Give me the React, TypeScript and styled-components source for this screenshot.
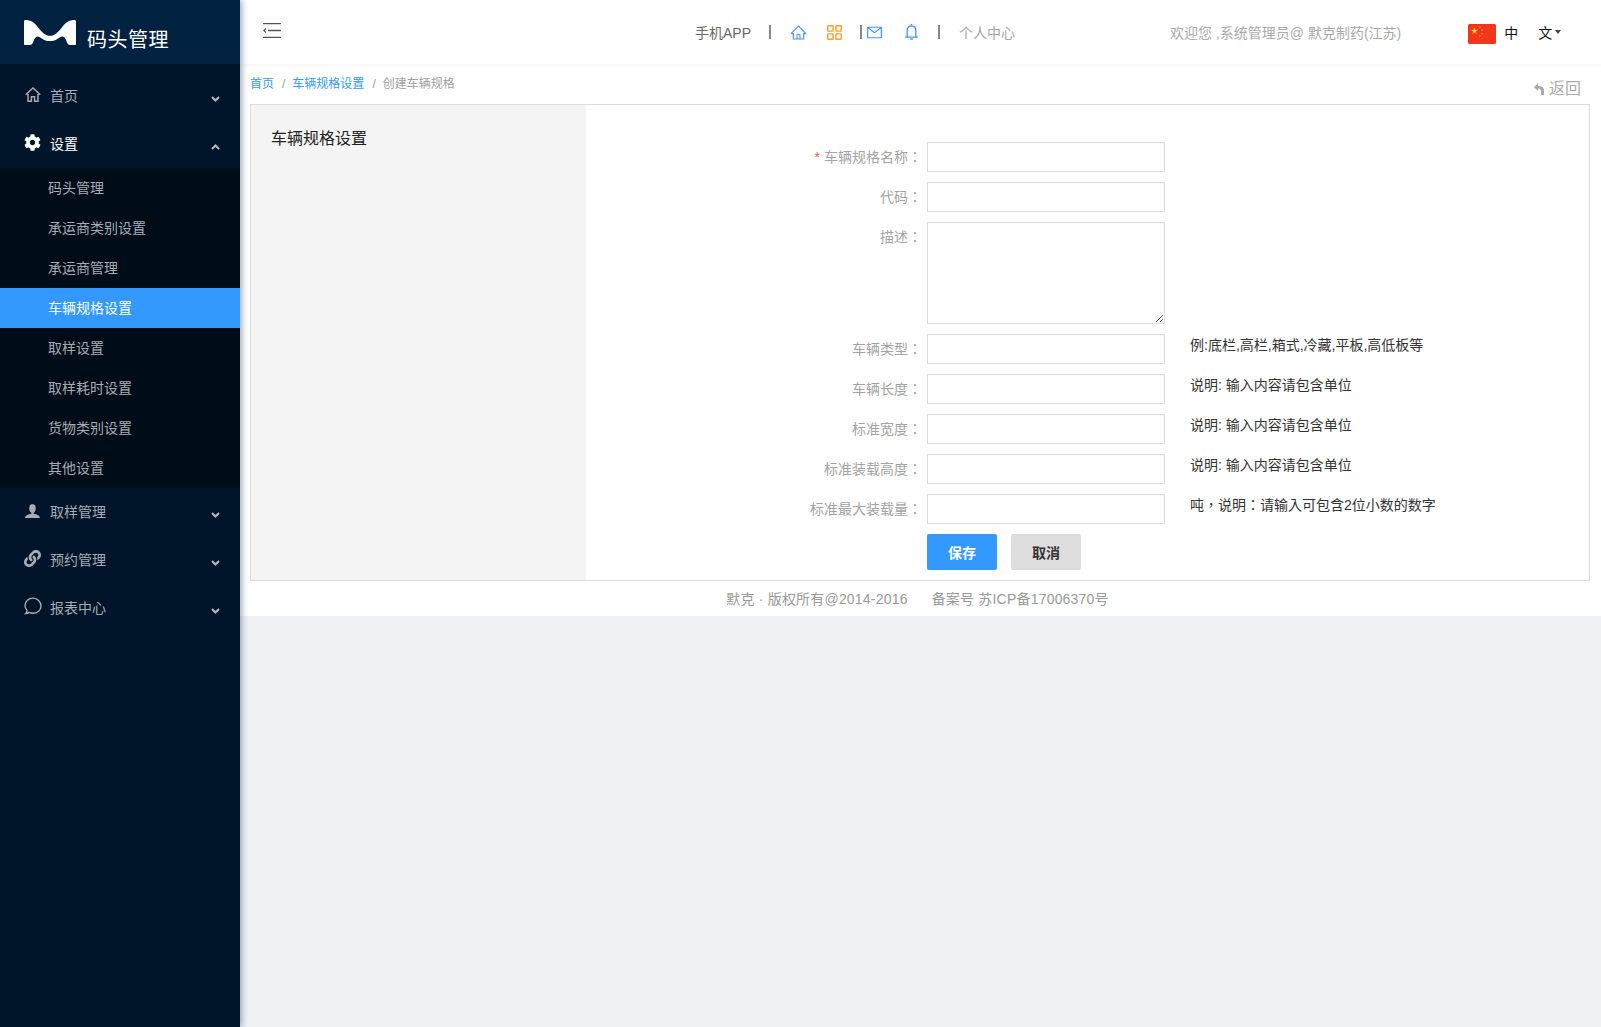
import React from "react";
import styled, { createGlobalStyle } from "styled-components";
import { AiOutlineHome, AiOutlineMail } from "react-icons/ai";
import { FaCog, FaLink } from "react-icons/fa";
import { ImUser } from "react-icons/im";

const FONT = `"Liberation Sans", "Noto Sans CJK SC", sans-serif`;

const Global = createGlobalStyle`
  html, body { margin: 0; padding: 0; height: 100%; overflow: hidden; background: #f0f1f5; }
  #root { height: 100%; }
  * { box-sizing: border-box; }
  body { font-family: ${FONT}; font-size: 14px; }
`;

const Page = styled.div`
  display: flex;
  height: 1027px;
`;

const Sidebar = styled.aside`
  width: 240px;
  flex: none;
  background: #001529;
  box-shadow: 2px 0 6px rgba(0, 21, 41, 0.35);
  position: relative;
  z-index: 2;
`;

const Brand = styled.div`
  height: 64px;
  background: #002140;
  display: flex;
  align-items: center;
  padding-left: 24px;
  color: #fff;
`;

const BrandName = styled.span`
  font-size: 20px;
  line-height: 24px;
  letter-spacing: 0.5px;
  margin: 16px 0 0 11px;
`;

const Menu = styled.nav`
  padding-top: 8px;
`;

const MenuRow = styled.div<{ $open?: boolean }>`
  height: 48px;
  display: flex;
  align-items: center;
  padding: 0 20px 0 24px;
  color: ${(p) => (p.$open ? "#fff" : "#a6adb4")};
  font-size: 14px;
`;

const MenuIcon = styled.span`
  width: 26px;
  flex: none;
  display: flex;
  align-items: center;
  font-size: 17px;
  margin-bottom: 4px;
`;

const MenuLabel = styled.span`
  flex: 1;
  margin-bottom: 2px;
`;

const Caret = styled.span`
  display: flex;
  color: #b4bac0;
  margin-top: 6px;
`;

const SubMenu = styled.div`
  background: #000c17;
`;

const SubItem = styled.div<{ $active?: boolean }>`
  height: 40px;
  line-height: 40px;
  padding-left: 48px;
  font-size: 14px;
  color: ${(p) => (p.$active ? "#fff" : "#a6adb4")};
  background: ${(p) => (p.$active ? "#3399ff" : "transparent")};
`;

const Main = styled.div`
  flex: 1;
  min-width: 0;
  display: flex;
  flex-direction: column;
`;

const Header = styled.header`
  height: 64px;
  flex: none;
  background: #fff;
  display: flex;
  align-items: center;
  box-shadow: 0 2px 4px rgba(0, 0, 0, 0.04);
  position: relative;
`;

const Toggle = styled.span`
  display: flex;
  margin: 0 0 4px 23px;
`;

const NavCluster = styled.nav`
  display: flex;
  align-items: center;
  margin-left: 414px;
  height: 64px;
`;

const NavText = styled.span<{ $gap: number; $muted?: boolean }>`
  margin-left: ${(p) => p.$gap}px;
  font-size: 14px;
  color: ${(p) => (p.$muted ? "#a5a5a5" : "#666")};
  white-space: nowrap;
`;

const NavSep = styled.span<{ $gap: number }>`
  width: 2px;
  height: 14px;
  background: #888;
  margin-left: ${(p) => p.$gap}px;
`;

const NavIcon = styled.span<{ $gap: number; $color: string }>`
  display: flex;
  font-size: 17px;
  margin-left: ${(p) => p.$gap}px;
  color: ${(p) => p.$color};
`;

const Welcome = styled.span`
  margin-left: 155px;
  color: #a9a9a9;
  font-size: 14px;
  white-space: nowrap;
`;

const Flag = styled.span`
  display: flex;
  margin-left: 67px;
  margin-top: 3px;
`;

const Lang = styled.span`
  display: flex;
  align-items: center;
  margin-left: 8px;
  color: #111;
  font-size: 14px;
`;

const LangRest = styled.span`
  margin-left: 20px;
`;

const LangCaret = styled.span`
  width: 0;
  height: 0;
  margin-left: 3px;
  border-left: 3px solid transparent;
  border-right: 3px solid transparent;
  border-top: 4px solid #444;
`;

const Content = styled.div`
  flex: none;
  height: 552px;
  background: #fff;
  padding: 0 11px 0 10px;
  display: flex;
  flex-direction: column;
`;

const CrumbBar = styled.div`
  height: 40px;
  flex: none;
  display: flex;
  justify-content: space-between;
  padding-top: 11px;
  font-size: 12px;
  line-height: 18px;
`;

const Crumbs = styled.div`
  display: flex;
  color: #a0a0a0;
`;

const CrumbLink = styled.span`
  color: #3399ff;
`;

const CrumbSlash = styled.span`
  margin: 0 7px 0 8px;
  color: #999;
`;

const Back = styled.div`
  display: flex;
  align-items: center;
  gap: 5px;
  font-size: 16px;
  color: #aaa;
  margin: 3px 9px 0 0;
  height: 22px;
`;

const Panel = styled.section`
  height: 477px;
  flex: none;
  border: 1px solid #dcdcdc;
  display: flex;
`;

const PanelSide = styled.div`
  width: 335px;
  flex: none;
  background: #f4f4f4;
  padding: 21px 0 0 20px;
`;

const PanelTitle = styled.h2`
  margin: 0;
  font-size: 16px;
  line-height: 26px;
  font-weight: 400;
  color: #222;
`;

const Form = styled.form`
  flex: 1;
  padding-top: 37px;
  display: flex;
  flex-direction: column;
  gap: 10px;
`;

const Row = styled.div`
  display: flex;
  align-items: flex-start;
`;

const Label = styled.label`
  width: 336px;
  height: 30px;
  flex: none;
  margin-right: 5px;
  text-align: right;
  font-size: 14px;
  line-height: 28px;
  color: #a3a3a3;
  white-space: nowrap;
`;

const Colon = styled.span`
  font-family: "Noto Sans CJK TC", sans-serif;
`;

const Star = styled.span`
  color: #f5564e;
  margin-right: 4px;
`;

const Input = styled.input`
  width: 238px;
  height: 30px;
  flex: none;
  border: 1px solid #dcdcdc;
  background: #fff;
  outline: none;
  padding: 0 6px;
`;

const TextArea = styled.textarea`
  width: 238px;
  height: 102px;
  flex: none;
  border: 1px solid #dcdcdc;
  background: #fff;
  outline: none;
  margin: 0;
  display: block;
`;

const Hint = styled.span<{ $punct?: boolean }>`
  margin-left: 25px;
  font-size: 14px;
  line-height: 22px;
  height: 22px;
  color: #333;
  white-space: nowrap;
  font-family: ${(p) => (p.$punct ? `"Liberation Sans", "Noto Sans CJK TC", sans-serif` : "inherit")};
`;

const Actions = styled.div`
  display: flex;
  gap: 14px;
  margin-left: 341px;
`;

const Button = styled.button<{ $primary?: boolean }>`
  width: 70px;
  height: 36px;
  border: 0;
  border-radius: 2px;
  font-family: ${FONT};
  font-size: 14px;
  font-weight: 700;
  color: ${(p) => (p.$primary ? "#fff" : "#333")};
  background: ${(p) => (p.$primary ? "#3399ff" : "#dddddd")};
`;

const Footer = styled.footer`
  display: flex;
  justify-content: center;
  gap: 24px;
  height: 35px;
  flex: none;
  background: #fff;
  line-height: 36px;
  font-size: 14px;
  letter-spacing: 0.2px;
  color: #999;
  padding-right: 6px;
  margin: 0 -11px 0 -10px;
`;

const MLogo = () => (
  <svg width="52" height="25" viewBox="0 0 52 25">
    <path
      fill="#fff"
      d="M0 1.500C0 .5.6 0 1.600 0c5.200 0 8.600 2.400 12.400 7.200 3.600 4.600 7.200 8.600 12 8.600s8.400-4 12-8.600C41.800 2.400 45.200 0 50.400 0c1 0 1.600.5 1.600 1.500V24c0 .6-.4 1-1 1h-5c-1.800 0-2.600-1-3.400-3.400-1-3-2-5.200-4.200-5.200-3 0-5.400 4.600-12.400 4.600S16.600 16.400 13.600 16.400c-2.200 0-3.200 2.200-4.200 5.200C8.600 24 7.800 25 6 25H1c-.6 0-1-.4-1-1z"
    />
  </svg>
);

const MenuToggleIcon = () => (
  <svg width="18" height="15" viewBox="0 0 18 15" fill="none" stroke="#555" strokeWidth="1.300">
    <path d="M0 .7h18M5 7.500h13M0 14.300h18M3 5.500L1 7.500l2 2" />
  </svg>
);

const BackIcon = () => (
  <svg width="10" height="12" viewBox="0 0 10 12">
    <path fill="#a9a9a9" d="M4 0L0 4.200 4 8V5.400c2 0 3 .9 3 2.600v4h3V7.500C10 4.400 7.800 3 4 3z" />
  </svg>
);

const SideHomeIcon = () => (
  <svg width="16" height="15" viewBox="0 0 16 15" fill="none" stroke="currentColor" strokeWidth="1.500" style={{ marginLeft: 1 }}>
    <path d="M.7 7.800L8 1l7.300 6.800M3 7v7.200h3.400V9.700h3.200v4.500H13V7" />
  </svg>
);

const ChevronIcon = ({ up }: { up?: boolean }) => (
  <svg width="9" height="6" viewBox="0 0 9 6" fill="none" stroke="currentColor" strokeWidth="2">
    <path d={up ? "M1 5l3.500-3.500L8 5" : "M1 1l3.500 3.500L8 1"} />
  </svg>
);

const BubbleIcon = () => (
  <svg width="18" height="18" viewBox="0 0 18 18" fill="none" stroke="currentColor" strokeWidth="1.400">
    <path d="M1.700 16.600c1.600 0 2.600-.5 3.400-1.200 1.100.6 2.500.9 3.900.9 4.300 0 8-3.100 8-7.200S13.300 1.100 9 1.100 1 4.200 1 8.300c0 2 .7 3.600 2 4.900.1 1.300-.4 2.500-1.300 3.400z" />
  </svg>
);

const GridIcon = () => (
  <svg width="15" height="15" viewBox="0 0 15 15" fill="none" stroke="#ff9d28" strokeWidth="1.400">
    <rect x=".7" y=".7" width="5.400" height="5.400" rx=".6" />
    <rect x="8.900" y=".7" width="5.400" height="5.400" rx=".6" />
    <rect x=".7" y="8.900" width="5.400" height="5.400" rx=".6" />
    <rect x="8.900" y="8.900" width="5.400" height="5.400" rx=".6" />
  </svg>
);

const BellIcon = () => (
  <svg width="13" height="16" viewBox="0 0 13 16" fill="none" stroke="#3f93ff" strokeWidth="1.300">
    <path d="M2.200 13V6.200c0-2.600 1.800-4.400 4.300-4.400s4.300 1.800 4.300 4.400V13M.2 13.200h12.600M6.500 0v1.800M5 15.200h3" />
  </svg>
);

const star = (cx: number, cy: number, r: number) => {
  const pts: string[] = [];
  for (let i = 0; i < 10; i++) {
    const rad = i % 2 ? r * 0.4 : r;
    const a = -Math.PI / 2 + (i * Math.PI) / 5;
    pts.push(`${cx + rad * Math.cos(a)},${cy + rad * Math.sin(a)}`);
  }
  return pts.join(" ");
};

const ChinaFlag = () => (
  <svg width="28" height="20" viewBox="0 0 28 20">
    <rect width="28" height="20" rx="1.500" fill="#f4361c" />
    <g fill="#ffd83a">
      <polygon points={star(6.500, 7, 3.600)} />
      <polygon points={star(12, 3, 1)} />
      <polygon points={star(14, 6, 1)} />
      <polygon points={star(14, 9.500, 1)} />
      <polygon points={star(12, 12, 1)} />
    </g>
  </svg>
);

const subItems = ["码头管理", "承运商类别设置", "承运商管理", "车辆规格设置", "取样设置", "取样耗时设置", "货物类别设置", "其他设置"];

const hintUnit = "说明: 输入内容请包含单位";

const fields = [
  { label: "车辆类型", hint: "例:底栏,高栏,箱式,冷藏,平板,高低板等" },
  { label: "车辆长度", hint: hintUnit },
  { label: "标准宽度", hint: hintUnit },
  { label: "标准装载高度", hint: hintUnit },
  { label: "标准最大装载量", hint: "吨，说明：请输入可包含2位小数的数字", punct: true },
];

export default function App() {
  return (
    <Page>
      <Global />
      <Sidebar>
        <Brand>
          <MLogo />
          <BrandName>码头管理</BrandName>
        </Brand>
        <Menu>
          <MenuRow>
            <MenuIcon><SideHomeIcon /></MenuIcon>
            <MenuLabel>首页</MenuLabel>
            <Caret><ChevronIcon /></Caret>
          </MenuRow>
          <MenuRow $open>
            <MenuIcon><FaCog /></MenuIcon>
            <MenuLabel>设置</MenuLabel>
            <Caret><ChevronIcon up /></Caret>
          </MenuRow>
          <SubMenu>
            {subItems.map((s) => (
              <SubItem key={s} $active={s === "车辆规格设置"}>{s}</SubItem>
            ))}
          </SubMenu>
          <MenuRow>
            <MenuIcon><ImUser /></MenuIcon>
            <MenuLabel>取样管理</MenuLabel>
            <Caret><ChevronIcon /></Caret>
          </MenuRow>
          <MenuRow>
            <MenuIcon><FaLink /></MenuIcon>
            <MenuLabel>预约管理</MenuLabel>
            <Caret><ChevronIcon /></Caret>
          </MenuRow>
          <MenuRow>
            <MenuIcon><BubbleIcon /></MenuIcon>
            <MenuLabel>报表中心</MenuLabel>
            <Caret><ChevronIcon /></Caret>
          </MenuRow>
        </Menu>
      </Sidebar>
      <Main>
        <Header>
          <Toggle><MenuToggleIcon /></Toggle>
          <NavCluster>
            <NavText $gap={0}>手机APP</NavText>
            <NavSep $gap={18} />
            <NavIcon $gap={19} $color="#4a90ff"><AiOutlineHome /></NavIcon>
            <NavIcon $gap={20} $color="#ff9d28"><GridIcon /></NavIcon>
            <NavSep $gap={18} />
            <NavIcon $gap={4} $color="#3f93ff"><AiOutlineMail /></NavIcon>
            <NavIcon $gap={22} $color="#3f93ff"><BellIcon /></NavIcon>
            <NavSep $gap={20} />
            <NavText $gap={19} $muted>个人中心</NavText>
            <Welcome>欢迎您 ,系统管理员@ 默克制药(江苏)</Welcome>
            <Flag><ChinaFlag /></Flag>
            <Lang>
              中
              <LangRest>文</LangRest>
              <LangCaret />
            </Lang>
          </NavCluster>
        </Header>
        <Content>
          <CrumbBar>
            <Crumbs>
              <CrumbLink>首页</CrumbLink>
              <CrumbSlash>/</CrumbSlash>
              <CrumbLink>车辆规格设置</CrumbLink>
              <CrumbSlash>/</CrumbSlash>
              创建车辆规格
            </Crumbs>
            <Back><BackIcon />返回</Back>
          </CrumbBar>
          <Panel>
            <PanelSide>
              <PanelTitle>车辆规格设置</PanelTitle>
            </PanelSide>
            <Form>
              <Row>
                <Label><Star>*</Star>车辆规格名称<Colon>：</Colon></Label>
                <Input />
              </Row>
              <Row>
                <Label>代码<Colon>：</Colon></Label>
                <Input />
              </Row>
              <Row>
                <Label>描述<Colon>：</Colon></Label>
                <TextArea />
              </Row>
              {fields.map((f) => (
                <Row key={f.label}>
                  <Label>{f.label}<Colon>：</Colon></Label>
                  <Input />
                  <Hint $punct={f.punct}>{f.hint}</Hint>
                </Row>
              ))}
              <Actions>
                <Button type="button" $primary>保存</Button>
                <Button type="button">取消</Button>
              </Actions>
            </Form>
          </Panel>
          <Footer>
            <span>默克 · 版权所有@2014-2016</span>
            <span>备案号 苏ICP备17006370号</span>
          </Footer>
        </Content>
      </Main>
    </Page>
  );
}
